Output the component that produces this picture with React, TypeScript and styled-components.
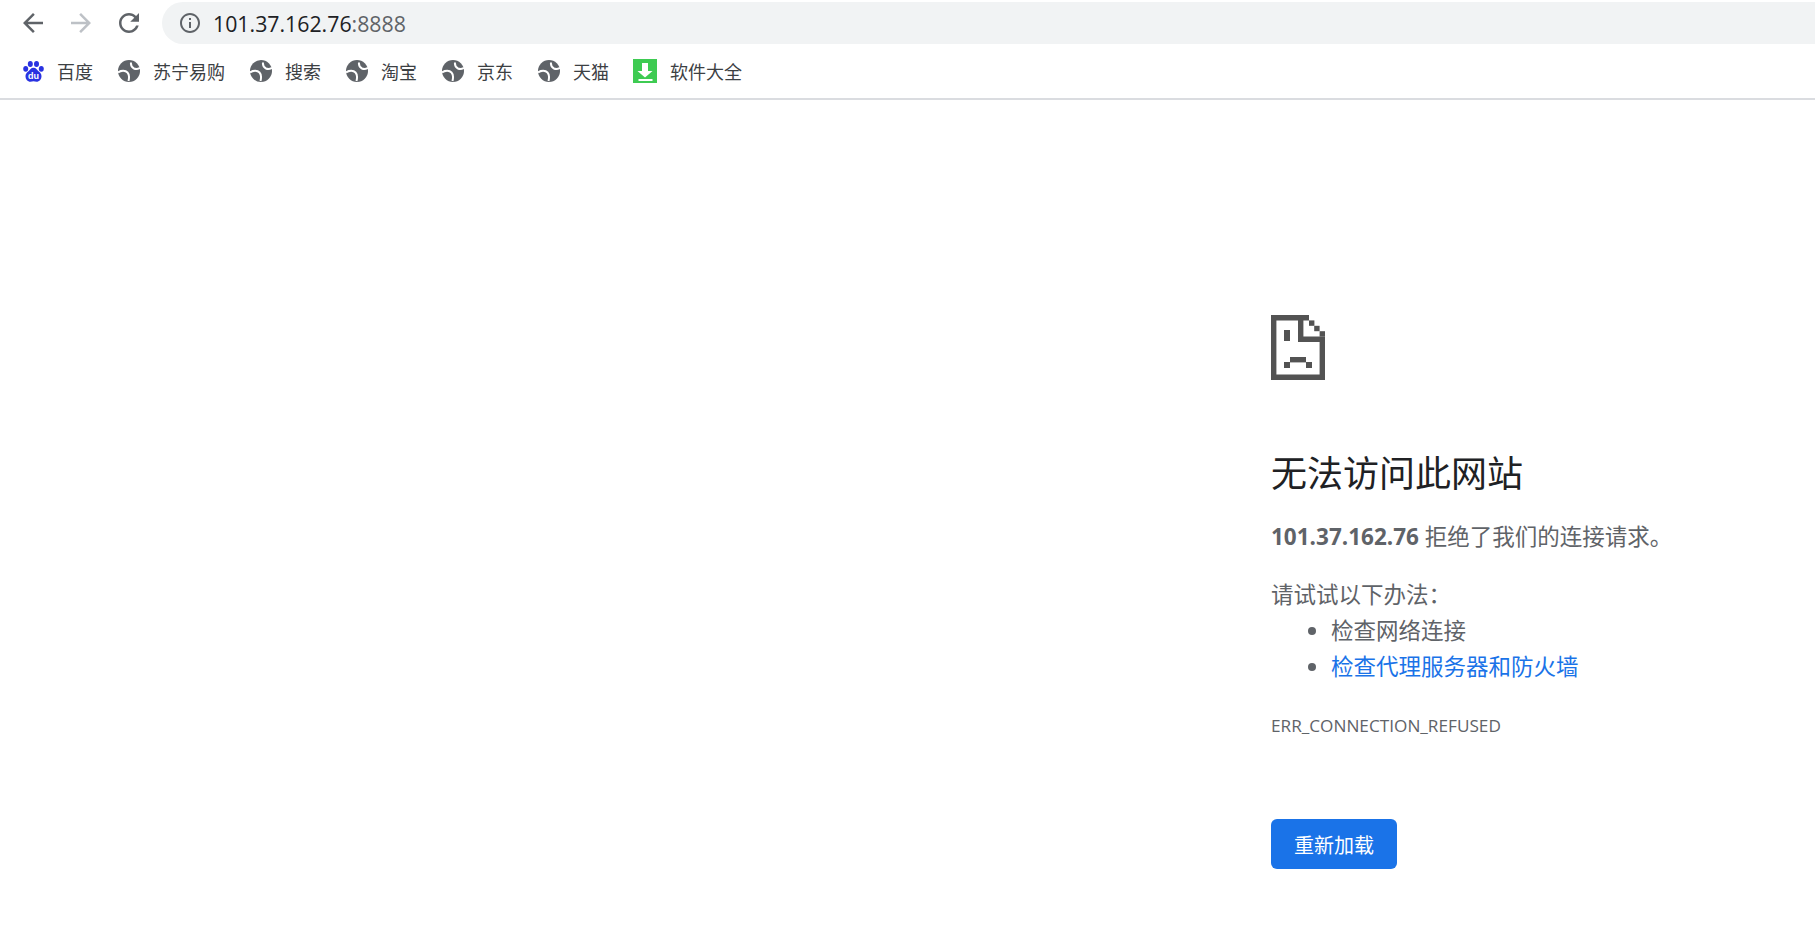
import styled, { createGlobalStyle } from "styled-components";

const FONT_STACK = `"Open Sans", "Noto Sans CJK SC", sans-serif`;

const GlobalStyle = createGlobalStyle`
  html, body {
    margin: 0;
    padding: 0;
    background: #fff;
  }
  body {
    font-family: ${FONT_STACK};
    overflow: hidden;
  }
`;

const Page = styled.div`
  width: 1815px;
  height: 948px;
  display: flex;
  flex-direction: column;
`;

const Header = styled.header`
  height: 98px;
  flex: none;
  display: flex;
  flex-direction: column;
  border-bottom: 2px solid #dadce0;
`;

const Toolbar = styled.div`
  height: 42px;
  margin-top: 2px;
  display: flex;
  align-items: center;
  padding-left: 18px;
`;

const NavButton = styled.button<{ $disabled?: boolean }>`
  width: 30px;
  height: 30px;
  margin-right: 18px;
  padding: 0;
  border: 0;
  background: none;
  color: ${(p) => (p.$disabled ? "#bdc1c6" : "#5f6368")};
  flex: none;
  svg {
    display: block;
  }
`;

const Omnibox = styled.div`
  flex: 1;
  height: 42px;
  padding-left: 16px;
  display: flex;
  align-items: center;
  background: #f1f3f4;
  border-radius: 21px 0 0 21px;
  color: #5f6368;
  svg {
    flex: none;
    margin-right: 11px;
  }
`;

const Url = styled.div`
  font-size: 21.3px;
  color: #5f6368;
  b {
    font-weight: 400;
    color: #202124;
  }
`;

const BookmarkBar = styled.nav`
  flex: 1;
  display: flex;
  align-items: center;
  padding-left: 22px;
  gap: 25px;
`;

const Bookmark = styled.a`
  display: flex;
  align-items: center;
  gap: 13px;
  font-size: 18px;
  line-height: 24px;
  color: #3c4043;
`;

const BookmarkLabel = styled.span`
  padding-top: 2px;
`;

const IconSlot = styled.span<{ $wide?: boolean }>`
  width: ${(p) => (p.$wide ? "23px" : "22px")};
  height: 24px;
  display: flex;
  align-items: center;
  justify-content: flex-end;
  svg {
    flex: none;
  }
`;

const Main = styled.main`
  padding: 215px 0 0 1271px;
  font-size: 22.5px;
  line-height: 36px;
  color: #5f6368;
`;

const SadIcon = styled.svg`
  display: block;
  width: 54px;
  height: 65px;
`;

const Title = styled.h1`
  margin: 71px 0 23px;
  font-size: 36px;
  line-height: 45px;
  font-weight: 400;
  color: #202124;
`;

const Summary = styled.p`
  margin: 0 0 22px;
  strong {
    font-weight: 700;
  }
`;

const Suggestions = styled.ul`
  margin: 0;
  padding: 0 0 0 60px;
`;

const Suggestion = styled.li`
  a {
    color: #1a73e8;
  }
`;

const ErrorCode = styled.div`
  margin-top: 29px;
  font-size: 17.2px;
  line-height: 24px;
`;

const ReloadButton = styled.button`
  display: block;
  width: 126px;
  height: 50px;
  margin-top: 81px;
  padding: 0;
  border: 0;
  border-radius: 6px;
  background: #1a73e8;
  color: #fff;
  font-family: ${FONT_STACK};
  font-size: 20px;
`;

const BackIcon = () => (
  <svg width="30" height="30" viewBox="0 0 24 24" fill="currentColor">
    <path d="M20 11H7.83l5.59-5.59L12 4l-8 8 8 8 1.41-1.41L7.83 13H20v-2z" />
  </svg>
);

const ForwardIcon = () => (
  <svg width="30" height="30" viewBox="0 0 24 24" fill="currentColor">
    <path d="M4 11h12.17l-5.59-5.59L12 4l8 8-8 8-1.41-1.41L16.17 13H4v-2z" />
  </svg>
);

const RefreshIcon = () => (
  <svg width="30" height="30" viewBox="0 0 24 24" fill="currentColor">
    <path d="M17.65 6.35C16.2 4.9 14.21 4 12 4c-4.42 0-7.99 3.58-7.99 8s3.57 8 7.99 8c3.73 0 6.84-2.55 7.73-6h-2.08c-.82 2.33-3.04 4-5.65 4-3.31 0-6-2.69-6-6s2.69-6 6-6c1.66 0 3.14.69 4.22 1.78L13 11h7V4l-2.35 2.35z" />
  </svg>
);

const InfoIcon = () => (
  <svg width="24" height="24" viewBox="0 0 24 24" fill="currentColor">
    <path d="M11 7h2v2h-2zm0 4h2v6h-2zm1-9C6.48 2 2 6.48 2 12s4.48 10 10 10 10-4.48 10-10S17.52 2 12 2zm0 18c-4.41 0-8-3.59-8-8s3.59-8 8-8 8 3.59 8 8-3.59 8-8 8z" />
  </svg>
);

const BaiduIcon = () => (
  <svg width="21" height="21" viewBox="0 0 21 21">
    <g fill="#2932e1">
      <ellipse cx="2.700" cy="7.800" rx="2.500" ry="2.900" />
      <ellipse cx="7.300" cy="3" rx="2.500" ry="3" />
      <ellipse cx="13.500" cy="3" rx="2.500" ry="3" />
      <ellipse cx="18.300" cy="7.800" rx="2.500" ry="2.900" />
      <path d="M10.500 6.800c2.600 0 3.400 2.200 5.300 3.700 1.900 1.500 2.700 2.700 2.700 4.700 0 3-2.200 5.500-4.900 5.500-1.200 0-2-.4-3.100-.4s-1.900.4-3.100.4c-2.700 0-4.900-2.500-4.900-5.500 0-2 .8-3.200 2.700-4.700 1.900-1.500 2.700-3.700 5.300-3.700z" />
    </g>
    <text x="10.500" y="18" textAnchor="middle" fontFamily="Liberation Sans, sans-serif" fontSize="9" fontWeight="700" fill="#fff">
      du
    </text>
  </svg>
);

const GlobeIcon = () => (
  <svg width="22" height="22" viewBox="0 0 22 22">
    <circle cx="11" cy="11" r="11" fill="#5f6368" />
    <path d="M0 12.500C3.500 10 7.500 10.500 9.500 12.500C11.200 14.300 11.500 17 10.500 21" fill="none" stroke="#fff" strokeWidth="2" />
    <path d="M13 2.500C12.700 5 14 7.500 16 8.500C18 9.400 20 9 22 8" fill="none" stroke="#fff" strokeWidth="2" />
  </svg>
);

const DownloadIcon = () => (
  <svg width="24" height="24" viewBox="0 0 24 24">
    <rect width="24" height="24" fill="#3ecb52" />
    <path d="M9 4h6v8h4.500L12 18.500 4.500 12H9z" fill="#fff" />
    <rect x="5.500" y="20" width="14" height="2" fill="#fff" />
  </svg>
);

const bookmarks = [
  { label: "百度", icon: <BaiduIcon /> },
  { label: "苏宁易购", icon: <GlobeIcon /> },
  { label: "搜索", icon: <GlobeIcon /> },
  { label: "淘宝", icon: <GlobeIcon /> },
  { label: "京东", icon: <GlobeIcon /> },
  { label: "天猫", icon: <GlobeIcon /> },
  { label: "软件大全", icon: <DownloadIcon />, wide: true },
];

export default function App() {
  return (
    <Page>
      <GlobalStyle />
      <Header>
        <Toolbar>
          <NavButton>
            <BackIcon />
          </NavButton>
          <NavButton $disabled>
            <ForwardIcon />
          </NavButton>
          <NavButton>
            <RefreshIcon />
          </NavButton>
          <Omnibox>
            <InfoIcon />
            <Url>
              <b>101.37.162.76</b>:8888
            </Url>
          </Omnibox>
        </Toolbar>
        <BookmarkBar>
          {bookmarks.map((b) => (
            <Bookmark key={b.label}>
              <IconSlot $wide={b.wide}>{b.icon}</IconSlot>
              <BookmarkLabel>{b.label}</BookmarkLabel>
            </Bookmark>
          ))}
        </BookmarkBar>
      </Header>
      <Main>
        <SadIcon viewBox="0 0 54 65" fill="#535353">
          <path
            fillRule="evenodd"
            d="M0 0H38V5.400H32.400V21.600H54V65H0ZM5.400 5.400V59.600H48.600V27H27V5.400Z"
          />
          <rect x="38" y="5.400" width="5.400" height="5.400" />
          <rect x="43.200" y="10.800" width="5.400" height="5.400" />
          <rect x="48.600" y="16.200" width="5.400" height="5.400" />
          <rect x="13" y="15" width="6" height="11" />
          <rect x="19" y="42" width="16" height="5.400" />
          <rect x="13" y="47" width="6" height="6" />
          <rect x="35" y="47" width="6" height="6" />
        </SadIcon>
        <Title>无法访问此网站</Title>
        <Summary>
          <strong>101.37.162.76</strong> 拒绝了我们的连接请求。
        </Summary>
        <div>请试试以下办法：</div>
        <Suggestions>
          <Suggestion>检查网络连接</Suggestion>
          <Suggestion>
            <a>检查代理服务器和防火墙</a>
          </Suggestion>
        </Suggestions>
        <ErrorCode>ERR_CONNECTION_REFUSED</ErrorCode>
        <ReloadButton>重新加载</ReloadButton>
      </Main>
    </Page>
  );
}
